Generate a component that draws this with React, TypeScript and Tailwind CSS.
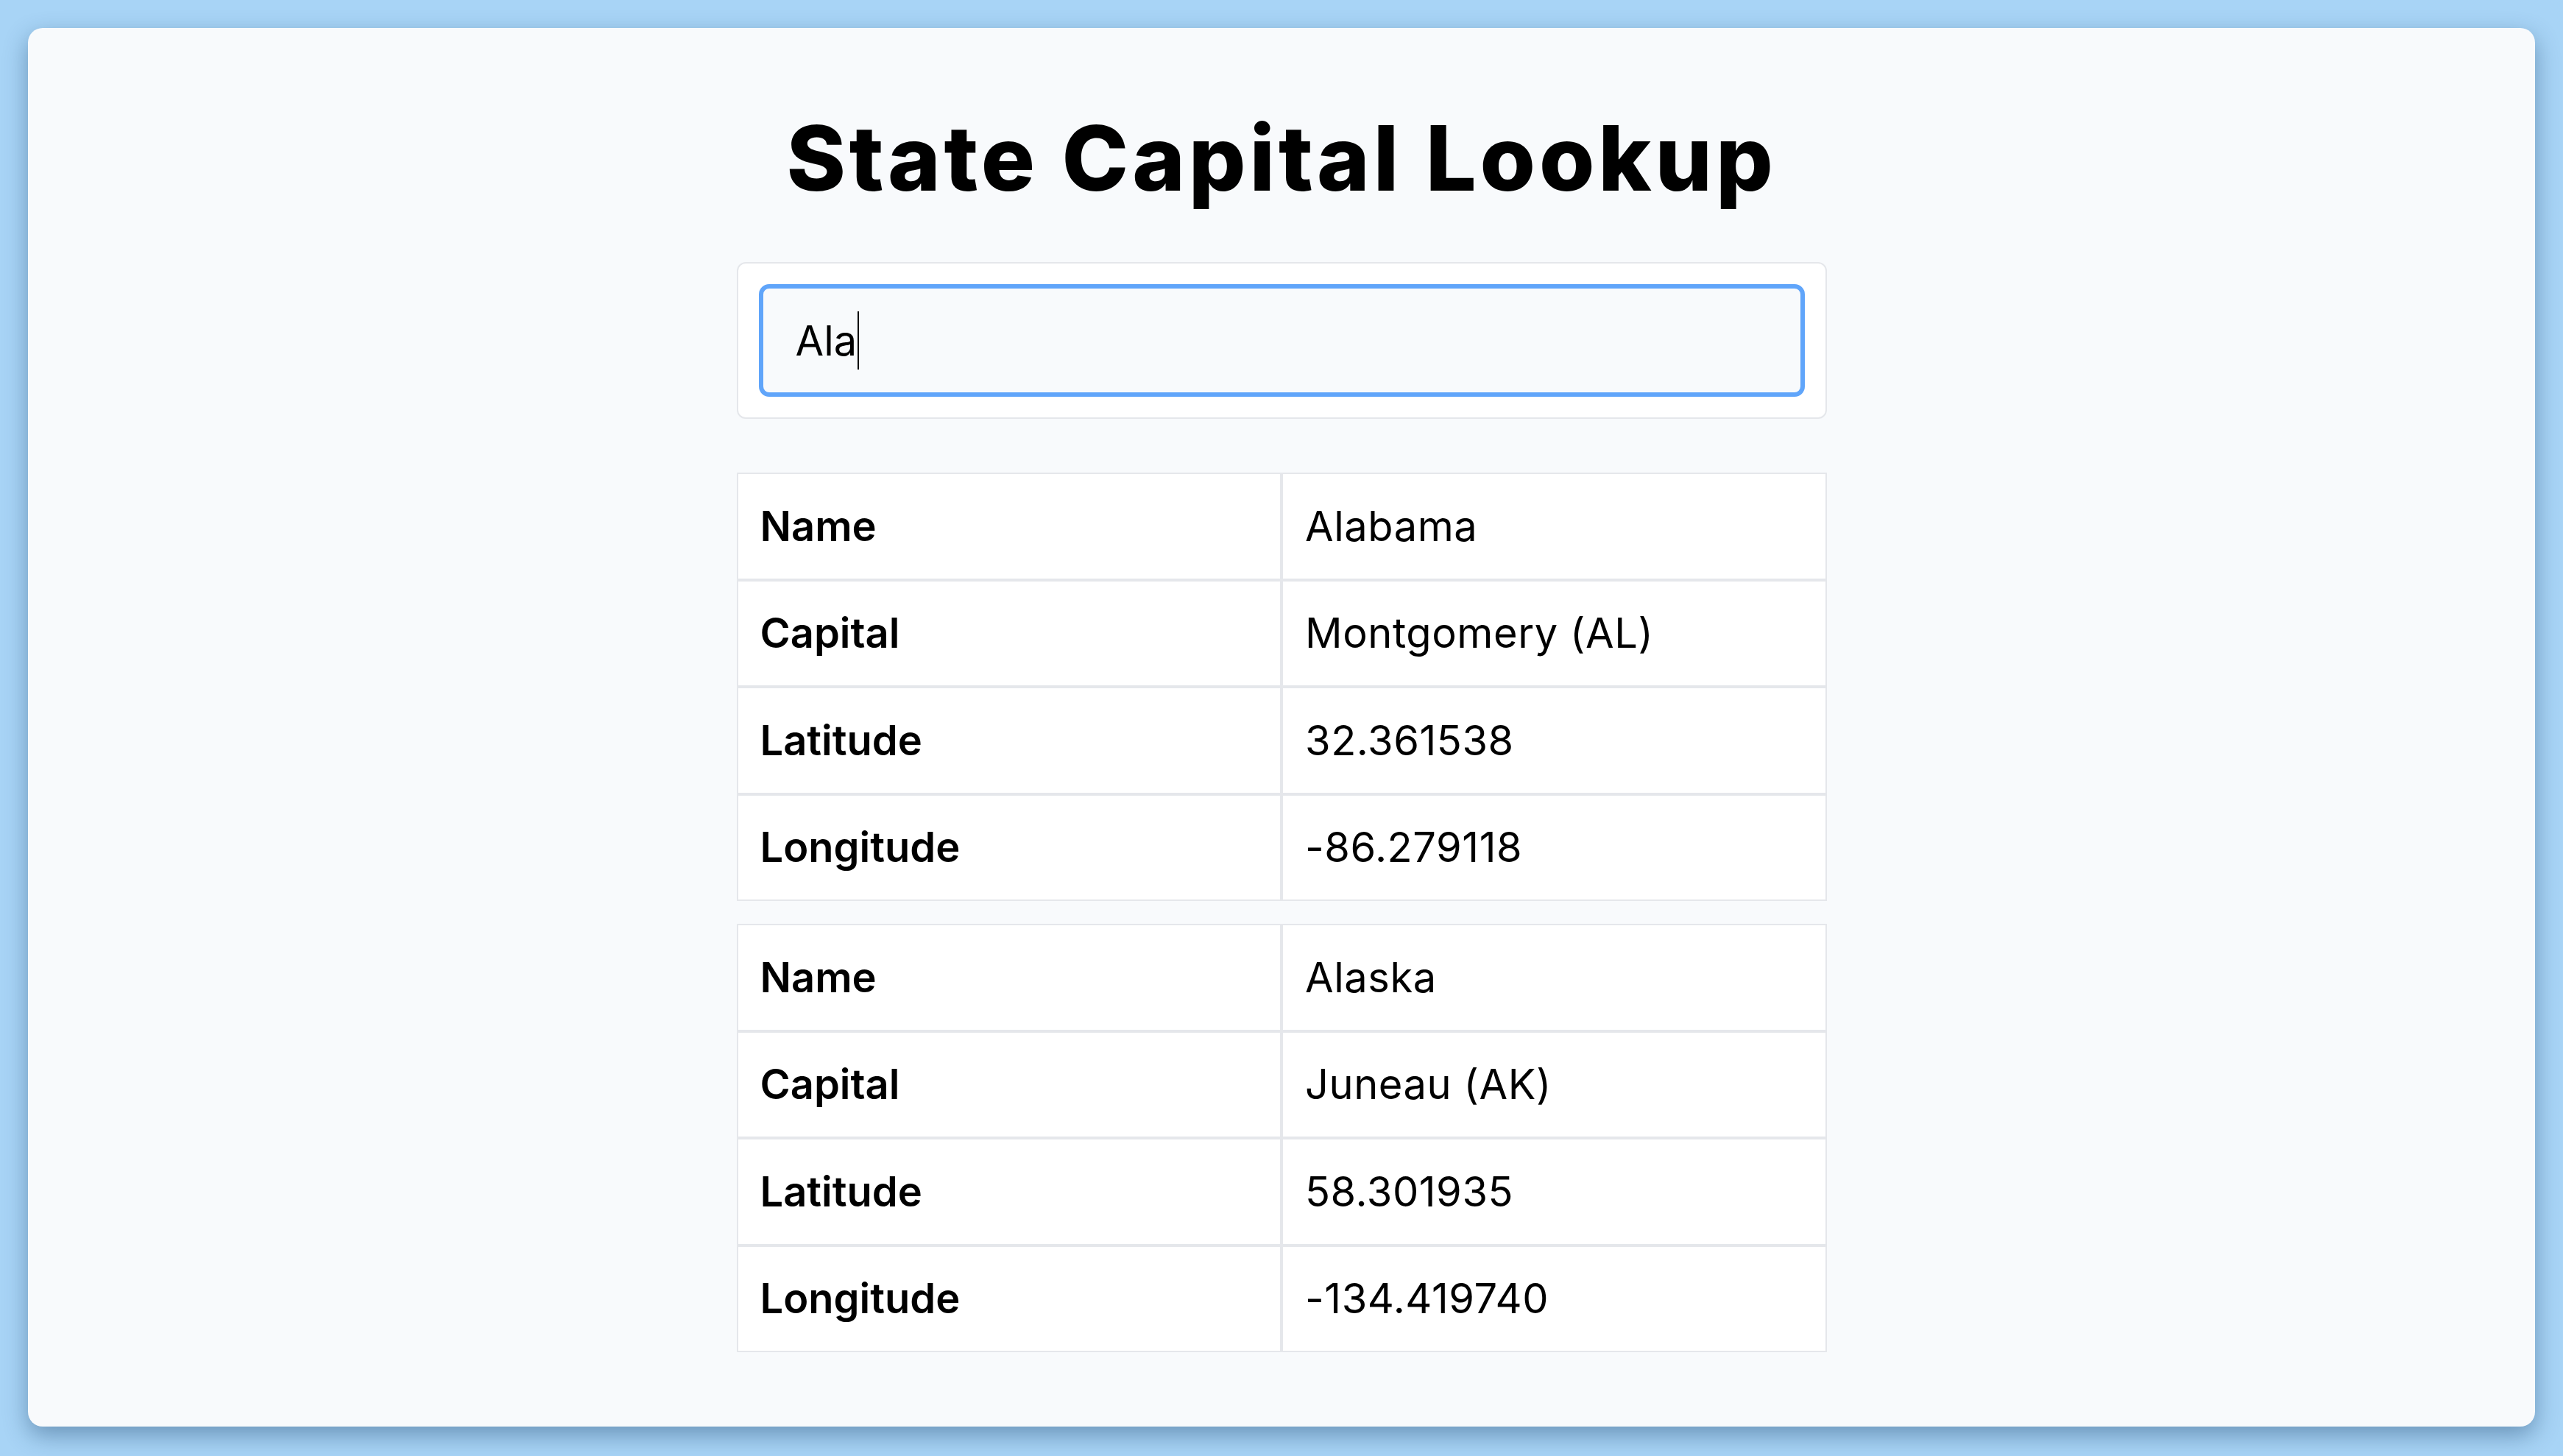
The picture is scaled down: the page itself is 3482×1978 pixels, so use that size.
const states = [
  { name: 'Alabama', capital: 'Montgomery (AL)', lat: '32.361538', lng: '-86.279118' },
  { name: 'Alaska', capital: 'Juneau (AK)', lat: '58.301935', lng: '-134.419740' },
]

function StateTable({ state }: { state: (typeof states)[number] }) {
  const rows = [
    ['Name', state.name],
    ['Capital', state.capital],
    ['Latitude', state.lat],
    ['Longitude', state.lng],
  ]

  return (
    <div className="flex w-full flex-col">
      {rows.map(([label, value]) => (
        <div key={label} className="flex h-[145.5px]">
          <div className="flex w-1/2 items-center border-2 border-[#e5e7eb] bg-white px-[30px] font-semibold">
            {label}
          </div>
          <div className="flex w-1/2 items-center border-2 border-[#e5e7eb] bg-white px-[30px] tracking-[0.01em]">
            {value}
          </div>
        </div>
      ))}
    </div>
  )
}

export default function App() {
  return (
    <div
      className="h-screen w-full bg-[#a8d4f6] px-[38px] pt-[38px] pb-[40px] text-black"
      style={{ fontFamily: 'Inter, "Noto Sans", sans-serif' }}
    >
      <div className="flex h-full flex-col items-center rounded-[20px] bg-[#f8fafc] shadow-[0_12px_32px_rgba(30,70,110,0.45)]">
        <h1 className="mt-[116px] text-[122px] font-extrabold leading-none tracking-[0.04em]">
          State Capital Lookup
        </h1>

        <div className="mt-[80px] w-[1481px] rounded-[12px] border-2 border-[#e5e7eb] bg-white p-[28px]">
          <div className="flex h-[153px] items-center rounded-[14px] border-[6px] border-[#60a5fa] bg-[#f8fafc] pl-[44px] text-[56px]">
            <span>Ala</span>
            <span className="ml-[1px] h-[79px] w-[2px] bg-black" />
          </div>
        </div>

        <div className="mt-[73px] flex w-[1481px] flex-col gap-[31px] text-[56px]">
          {states.map((s) => (
            <StateTable key={s.name} state={s} />
          ))}
        </div>
      </div>
    </div>
  )
}
